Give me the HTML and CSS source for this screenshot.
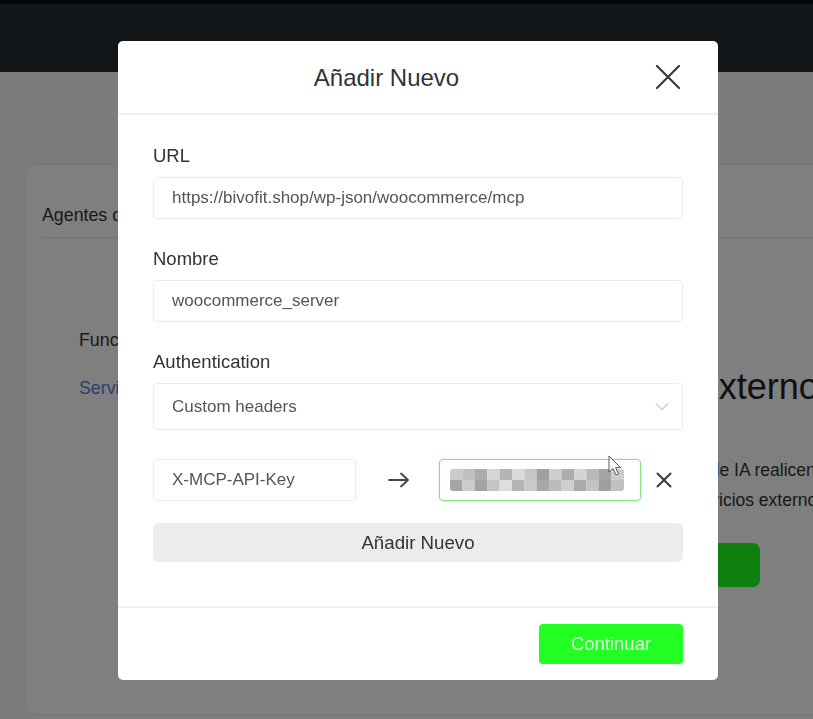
FILE: index.html
```html
<!DOCTYPE html>
<html lang="es">
<head>
<meta charset="utf-8">
<title>Añadir Nuevo</title>
<link rel="stylesheet" href="styles.css">
</head>
<body>
<div class="page">
  <header class="topbar"></header>
  <main class="content">
    <section class="card">
      <nav class="tabs"><span class="tab">Agentes de IA</span></nav>
      <div class="card-body">
        <aside class="side">
          <div class="side-item">Funciones</div>
          <a class="side-link">Servidores MCP</a>
        </aside>
        <div class="main">
          <h1 class="main-title">Servidores MCP externos</h1>
          <div class="main-line first">Esto permite que los agentes de IA realicen</div>
          <div class="main-line">tareas y acciones mediante servicios externos</div>
          <button class="main-btn">Añadir servidor</button>
        </div>
      </div>
    </section>
  </main>
</div>

<div class="overlay">
  <div class="modal">
    <div class="modal-header">
      <h2 class="modal-title">Añadir Nuevo</h2>
      <button class="close-btn" aria-label="Cerrar">
        <svg width="26" height="26" viewBox="0 0 26 26"><path d="M2 2 L24 24 M24 2 L2 24" stroke="#3a3a3a" stroke-width="2.2" stroke-linecap="round"/></svg>
      </button>
    </div>
    <div class="modal-body">
      <div class="group">
        <label class="label">URL</label>
        <div class="field">https://bivofit.shop/wp-json/woocommerce/mcp</div>
      </div>
      <div class="group">
        <label class="label">Nombre</label>
        <div class="field">woocommerce_server</div>
      </div>
      <div class="group">
        <label class="label">Authentication</label>
        <div class="field select">
          <span>Custom headers</span>
          <svg width="14" height="9" viewBox="0 0 14 9"><path d="M1 1.5 L7 7.5 L13 1.5" fill="none" stroke="#cfcfcf" stroke-width="1.4"/></svg>
        </div>
      </div>
      <div class="header-row">
        <div class="field">X-MCP-API-Key</div>
        <div class="arrow">
          <svg width="22" height="16" viewBox="0 0 22 16"><path d="M1 8 H20 M13 1.5 L20 8 L13 14.5" fill="none" stroke="#444" stroke-width="1.8" stroke-linecap="round" stroke-linejoin="round"/></svg>
        </div>
        <div class="field value">
          <svg class="mosaic" width="174" height="22" viewBox="0 0 174 22">
            <rect x="0" y="0" width="12.5" height="11" fill="#cbcbcb"/>
            <rect x="12.4" y="0" width="12.5" height="11" fill="#c0c0c0"/>
            <rect x="24.8" y="0" width="12.5" height="11" fill="#adadad"/>
            <rect x="37.2" y="0" width="12.5" height="11" fill="#d6d6d6"/>
            <rect x="49.6" y="0" width="12.5" height="11" fill="#b4b4b4"/>
            <rect x="62" y="0" width="12.5" height="11" fill="#dadada"/>
            <rect x="74.4" y="0" width="12.5" height="11" fill="#c6c6c6"/>
            <rect x="86.8" y="0" width="12.5" height="11" fill="#a0a0a0"/>
            <rect x="99.2" y="0" width="12.5" height="11" fill="#cfcfcf"/>
            <rect x="111.6" y="0" width="12.5" height="11" fill="#adadad"/>
            <rect x="124" y="0" width="12.5" height="11" fill="#d4d4d4"/>
            <rect x="136.4" y="0" width="12.5" height="11" fill="#b8b8b8"/>
            <rect x="148.8" y="0" width="12.5" height="11" fill="#a3a3a3"/>
            <rect x="161.2" y="0" width="12.8" height="11" fill="#cccccc"/>
            <rect x="0" y="11" width="12.5" height="11" fill="#a5a5a5"/>
            <rect x="12.4" y="11" width="12.5" height="11" fill="#cbcbcb"/>
            <rect x="24.8" y="11" width="12.5" height="11" fill="#a3a3a3"/>
            <rect x="37.2" y="11" width="12.5" height="11" fill="#c4c4c4"/>
            <rect x="49.6" y="11" width="12.5" height="11" fill="#dedede"/>
            <rect x="62" y="11" width="12.5" height="11" fill="#b4b4b4"/>
            <rect x="74.4" y="11" width="12.5" height="11" fill="#c9c9c9"/>
            <rect x="86.8" y="11" width="12.5" height="11" fill="#a8a8a8"/>
            <rect x="99.2" y="11" width="12.5" height="11" fill="#bbbbbb"/>
            <rect x="111.6" y="11" width="12.5" height="11" fill="#cfcfcf"/>
            <rect x="124" y="11" width="12.5" height="11" fill="#ababab"/>
            <rect x="136.4" y="11" width="12.5" height="11" fill="#c3c3c3"/>
            <rect x="148.8" y="11" width="12.5" height="11" fill="#9e9e9e"/>
            <rect x="161.2" y="11" width="12.8" height="11" fill="#c1c1c1"/>
          </svg>
          <svg class="cursor" width="14" height="22" viewBox="0 0 14 22"><path d="M1 1 L1 17 L5 13.5 L8 20 L10.5 19 L7.6 12.6 L12.6 12.6 Z" fill="#fff" stroke="#555" stroke-width="1" stroke-linejoin="round"/></svg>
        </div>
        <button class="remove-btn" aria-label="Eliminar">
          <svg width="16" height="16" viewBox="0 0 16 16"><path d="M1.5 1.5 L14.5 14.5 M14.5 1.5 L1.5 14.5" stroke="#3a3a3a" stroke-width="2" stroke-linecap="round"/></svg>
        </button>
      </div>
      <button class="add-btn">Añadir Nuevo</button>
    </div>
    <div class="modal-footer">
      <button class="continue-btn">Continuar</button>
    </div>
  </div>
</div>
</body>
</html>
```
FILE: styles.css
```css
* { box-sizing: border-box; }

html, body {
  margin: 0;
  padding: 0;
  width: 813px;
  height: 719px;
  overflow: hidden;
  font-family: "Liberation Sans", Arial, sans-serif;
}

button {
  font-family: inherit;
  border: none;
  background: none;
  padding: 0;
  cursor: pointer;
}

/* ---------- background page ---------- */
.page {
  width: 813px;
  height: 719px;
  background: #f9f9f9;
  display: flex;
  flex-direction: column;
  overflow: hidden;
}

.topbar {
  height: 72px;
  flex: none;
  background: #252c33;
  border-top: 4px solid #0c0e16;
}

.content {
  flex: 1;
  padding: 92px 0 0 25px;
  overflow: hidden;
}

.card {
  width: 830px;
  height: 551px;
  background: #ffffff;
  border: 1px solid #ededed;
  border-radius: 12px;
}

.tabs {
  height: 73px;
  margin-left: 16px;
  border-bottom: 1px solid #e2e2e2;
  display: flex;
  align-items: flex-end;
}

.tab {
  font-size: 17.8px;
  line-height: 22px;
  color: #333;
  padding-bottom: 11px;
}

.card-body {
  display: grid;
  grid-template-columns: 455px 320px;
}

.side {
  padding: 91px 0 0 53px;
  display: flex;
  flex-direction: column;
  gap: 26px;
  font-size: 17.8px;
  line-height: 22px;
}

.side-item { color: #333; }
.side-link { color: #4d86d8; }

.main {
  padding-top: 128px;
  display: flex;
  flex-direction: column;
  align-items: center;
}

.main-title {
  margin: 0 18px 47px 0;
  font-size: 36px;
  line-height: 42px;
  font-weight: normal;
  color: #222;
  white-space: nowrap;
}

.main-line {
  margin-left: 12px;
  font-size: 17.5px;
  line-height: 30px;
  color: #333;
  white-space: nowrap;
}

.main-btn {
  margin-top: 28px;
  width: 238px;
  height: 44px;
  border-radius: 7px;
  background: #1eff1e;
  color: #ffffff;
  font-size: 18px;
}

/* ---------- overlay + modal ---------- */
.overlay {
  position: fixed;
  inset: 0;
  background: rgba(0, 0, 0, 0.5);
  padding: 41px 0 0 118px;
}

.modal {
  width: 600px;
  height: 639px;
  background: #ffffff;
  border-radius: 5px;
  display: flex;
  flex-direction: column;
}

.modal-header {
  height: 74px;
  flex: none;
  border-bottom: 2px solid #efefef;
  display: flex;
  align-items: center;
}

.modal-title {
  flex: 1;
  margin: 0;
  padding-top: 2px;
  text-align: center;
  font-size: 24px;
  font-weight: normal;
  color: #333;
}

.close-btn {
  margin-right: 37px;
  width: 26px;
  height: 26px;
  display: flex;
}

.modal-body {
  flex: 1;
  padding: 30px 35px 0;
}

.group { margin-bottom: 29px; }

.label {
  display: block;
  font-size: 18.5px;
  line-height: 22px;
  color: #333;
  margin-bottom: 10px;
}

.field {
  height: 42px;
  border: 1px solid #ececec;
  border-radius: 4px;
  padding: 0 18px;
  display: flex;
  align-items: center;
  font-size: 17px;
  color: #555;
}

.field.select {
  height: 47px;
  justify-content: space-between;
  padding-right: 13px;
}

.header-row {
  display: grid;
  grid-template-columns: 203px 83px 202px 42px;
  align-items: center;
}

.arrow {
  display: flex;
  justify-content: center;
  padding-left: 2px;
}

.field.value {
  position: relative;
  padding: 0 0 0 10px;
  border: 1.5px solid #86e286;
  box-shadow: 0 0 2px rgba(80, 220, 80, 0.45);
}

.mosaic {
  display: block;
  border-radius: 3px;
  filter: blur(0.6px);
}

.cursor {
  position: absolute;
  left: 168px;
  top: -5px;
}

.remove-btn {
  display: flex;
  justify-content: center;
  padding-left: 4px;
}

.add-btn {
  display: block;
  margin-top: 22px;
  width: 100%;
  height: 39px;
  border-radius: 6px;
  background: #ececec;
  font-size: 18.7px;
  color: #333;
}

.modal-footer {
  height: 74px;
  flex: none;
  border-top: 2px solid #efefef;
  display: flex;
  justify-content: flex-end;
  align-items: center;
  padding-right: 35px;
}

.continue-btn {
  width: 144px;
  height: 40px;
  border-radius: 4px;
  background: #22ff22;
  color: #d8ffd8;
  font-size: 18.5px;
}
```
